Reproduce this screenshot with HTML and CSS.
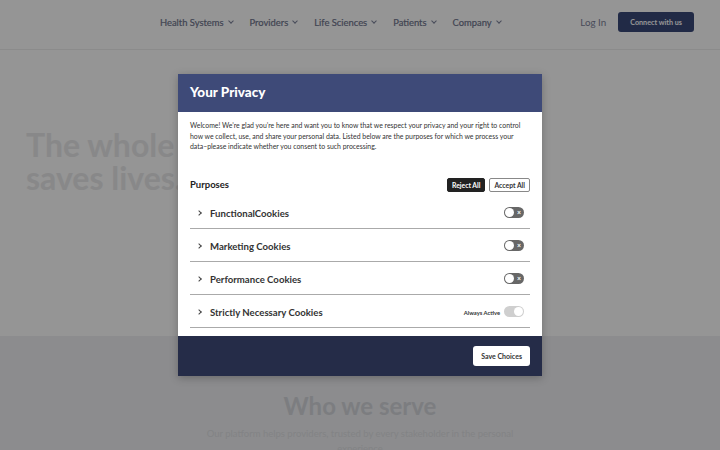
FILE: index.html
```html
<!DOCTYPE html>
<html lang="en">
<head>
<meta charset="utf-8">
<title>Your Privacy</title>
<link rel="stylesheet" href="styles.css">
</head>
<body>
<header class="site-header">
  <nav class="main-nav">
    <a class="nav-item">Health Systems <span class="caret"></span></a>
    <a class="nav-item">Providers <span class="caret"></span></a>
    <a class="nav-item">Life Sciences <span class="caret"></span></a>
    <a class="nav-item">Patients <span class="caret"></span></a>
    <a class="nav-item">Company <span class="caret"></span></a>
  </nav>
  <div class="header-actions">
    <a class="login">Log In</a>
    <a class="connect">Connect with us</a>
  </div>
</header>
<section class="hero">
  <h1 class="hero-title">The whole team<br>saves lives.</h1>
</section>
<section class="serve">
  <h2 class="serve-title">Who we serve</h2>
  <p class="serve-text">Our platform helps providers, trusted by every stakeholder in the personal<br>experience</p>
</section>

<div class="overlay">
  <div class="modal">
    <div class="modal-head">Your Privacy</div>
    <div class="modal-body">
      <p class="intro">Welcome! We’re glad you’re here and want you to know that we respect your privacy and your right to control how we collect, use, and share your personal data. Listed below are the purposes for which we process your data–please indicate whether you consent to such processing.</p>
      <div class="purposes-head">
        <span class="purposes-title">Purposes</span>
        <div class="bulk">
          <button class="btn-reject">Reject All</button>
          <button class="btn-accept">Accept All</button>
        </div>
      </div>
      <div class="row">
        <span class="chev"></span><span class="row-label">FunctionalCookies</span>
        <span class="toggle off"><span class="knob"></span><span class="x">×</span></span>
      </div>
      <div class="row">
        <span class="chev"></span><span class="row-label">Marketing Cookies</span>
        <span class="toggle off"><span class="knob"></span><span class="x">×</span></span>
      </div>
      <div class="row">
        <span class="chev"></span><span class="row-label">Performance Cookies</span>
        <span class="toggle off"><span class="knob"></span><span class="x">×</span></span>
      </div>
      <div class="row">
        <span class="chev"></span><span class="row-label">Strictly Necessary Cookies</span>
        <span class="always">Always Active</span>
        <span class="toggle on"><span class="knob"></span></span>
      </div>
    </div>
    <div class="modal-foot">
      <button class="btn-save">Save Choices</button>
    </div>
  </div>
</div>
</body>
</html>
```

FILE: styles.css
```css
* { box-sizing: border-box; }
html, body { margin: 0; padding: 0; }
body {
  width: 720px;
  height: 450px;
  overflow: hidden;
  font-family: "Lato", "Noto Sans", sans-serif;
  background: #ffffff;
  position: relative;
}
.site-header {
  height: 50px;
  display: flex;
  align-items: center;
  padding: 0 26px 5px 160px;
  border-bottom: 1px solid #eeeeee;
}
.main-nav {
  display: flex;
  gap: 17px;
}
.nav-item {
  font-size: 9.4px;
  font-weight: 400;
  color: #6f758d;
  display: flex;
  align-items: center;
  gap: 5px;
  -webkit-text-stroke: 0.2px #6f758d;
}
.caret {
  width: 4px;
  height: 4px;
  border-right: 1px solid #7c8299;
  border-bottom: 1px solid #7c8299;
  transform: rotate(45deg);
  margin-top: -2px;
}
.header-actions {
  margin-left: auto;
  display: flex;
  align-items: center;
  gap: 12px;
}
.login {
  font-size: 9.8px;
  font-weight: 400;
  color: #7c8299;
}
.connect {
  background: #3a4879;
  color: #ffffff;
  font-size: 7.2px;
  font-weight: 700;
  border-radius: 3px;
  padding: 0 12px;
  height: 20px;
  display: flex;
  align-items: center;
}
.hero {
  height: 286px;
  padding: 78px 0 0 26px;
}
.hero-title {
  margin: 0;
  font-size: 32px;
  line-height: 33px;
  font-weight: 700;
  color: #e9e9ea;
}
.serve {
  height: 114px;
  background: #eff0f3;
  text-align: center;
  padding-top: 55px;
}
.serve-title {
  margin: 0;
  font-size: 24px;
  font-weight: 700;
  color: #d5d7dc;
  line-height: 30px;
}
.serve-text {
  margin: 5px 0 0;
  font-size: 9.5px;
  line-height: 15px;
  color: #dfe0e4;
}
.overlay {
  position: absolute;
  inset: 0;
  background: rgba(0, 0, 0, 0.416);
  display: flex;
  justify-content: center;
  padding-top: 74px;
}
.modal {
  width: 364px;
  height: 302px;
  background: #ffffff;
  display: flex;
  flex-direction: column;
  box-shadow: 0 2px 8px rgba(0, 0, 0, 0.25);
}
.modal-head {
  height: 38px;
  background: #3e4a78;
  color: #ffffff;
  font-size: 13.5px;
  font-weight: 900;
  padding: 0 12px 3px;
  display: flex;
  align-items: center;
}
.modal-body {
  flex: 1;
  padding: 8px 12px 0;
}
.intro {
  margin: 0;
  font-size: 6.9px;
  line-height: 10.6px;
  color: #333333;
}
.purposes-head {
  display: flex;
  align-items: center;
  justify-content: space-between;
  margin-top: 25px;
  height: 16px;
}
.purposes-title {
  font-size: 9.5px;
  font-weight: 700;
  color: #222222;
}
.bulk {
  display: flex;
  gap: 4px;
}
.bulk button {
  font-family: inherit;
  font-size: 6.8px;
  font-weight: 700;
  height: 14px;
  padding: 0 4px;
  border-radius: 2px;
  cursor: pointer;
}
.btn-reject {
  background: #222222;
  color: #ffffff;
  border: 1px solid #222222;
}
.btn-accept {
  background: #ffffff;
  color: #333333;
  border: 1px solid #888888;
}
.row {
  height: 33px;
  border-bottom: 1.5px solid #aaaaaa;
  display: flex;
  align-items: center;
  padding: 3px 6px 0 7px;
}
.purposes-head + .row { height: 36px; padding-top: 6px; }
.chev {
  width: 4px;
  height: 4px;
  border-right: 1.1px solid #444444;
  border-bottom: 1.1px solid #444444;
  transform: rotate(-45deg);
  margin-right: 9px;
}
.row-label {
  font-size: 9.6px;
  font-weight: 700;
  color: #333333;
}
.toggle {
  margin-left: auto;
  width: 20px;
  height: 11px;
  border-radius: 6px;
  position: relative;
  display: block;
  margin-top: -2px;
}
.toggle.off { background: #676767; }
.toggle.on { background: #cfcfcf; margin-left: 4px; }
.knob {
  position: absolute;
  top: 1px;
  width: 9px;
  height: 9px;
  border-radius: 50%;
  background: #ffffff;
}
.toggle.off .knob { left: 1px; }
.toggle.on .knob { right: 1px; }
.x {
  position: absolute;
  right: 3px;
  top: 0;
  font-size: 7px;
  line-height: 11px;
  color: #ffffff;
  font-weight: 700;
}
.always {
  margin-left: auto;
  font-size: 5.8px;
  font-weight: 700;
  color: #333333;
}
.modal-foot {
  height: 40px;
  background: #252c48;
  display: flex;
  align-items: center;
  justify-content: flex-end;
  padding: 0 12px;
}
.btn-save {
  font-family: inherit;
  background: #ffffff;
  border: none;
  border-radius: 3px;
  height: 20px;
  padding: 0 8px;
  font-size: 7px;
  font-weight: 700;
  color: #333333;
}
```
